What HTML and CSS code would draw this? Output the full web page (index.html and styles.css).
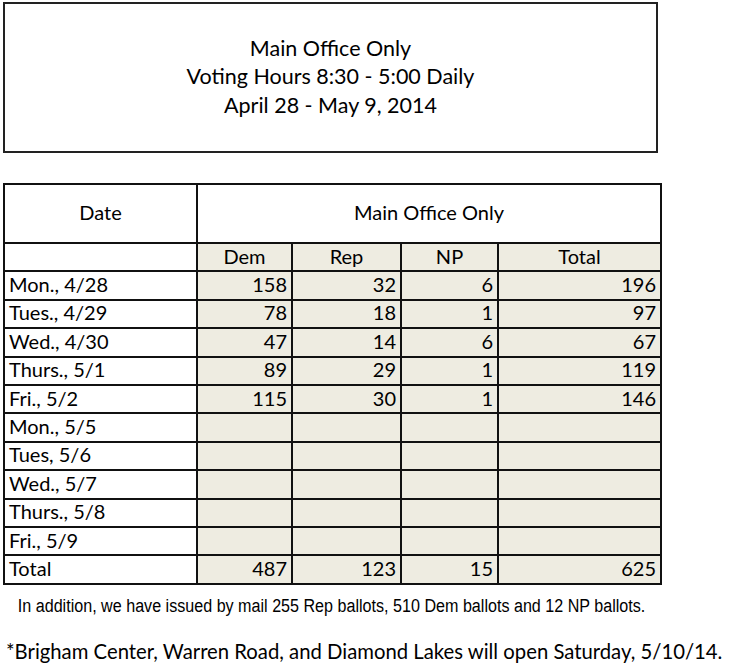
FILE: index.html
```html
<!DOCTYPE html>
<html>
<head>
<meta charset="utf-8">
<link rel="stylesheet" href="styles.css">
</head>
<body>
<div class="page">
  <div class="banner">
    <div>Main Office Only</div>
    <div>Voting Hours 8:30 - 5:00 Daily</div>
    <div>April 28 - May 9, 2014</div>
  </div>
  <table class="grid">
    <colgroup>
      <col class="c-date"><col class="c-dem"><col class="c-rep"><col class="c-np"><col class="c-total">
    </colgroup>
    <tr class="head1">
      <td class="center">Date</td>
      <td class="center" colspan="4">Main Office Only</td>
    </tr>
    <tr class="head2">
      <td></td>
      <td class="fill center">Dem</td>
      <td class="fill center">Rep</td>
      <td class="fill center">NP</td>
      <td class="fill center">Total</td>
    </tr>
    <tr><td>Mon., 4/28</td><td class="fill num">158</td><td class="fill num">32</td><td class="fill num">6</td><td class="fill num">196</td></tr>
    <tr><td>Tues., 4/29</td><td class="fill num">78</td><td class="fill num">18</td><td class="fill num">1</td><td class="fill num">97</td></tr>
    <tr><td>Wed., 4/30</td><td class="fill num">47</td><td class="fill num">14</td><td class="fill num">6</td><td class="fill num">67</td></tr>
    <tr><td>Thurs., 5/1</td><td class="fill num">89</td><td class="fill num">29</td><td class="fill num">1</td><td class="fill num">119</td></tr>
    <tr><td>Fri., 5/2</td><td class="fill num">115</td><td class="fill num">30</td><td class="fill num">1</td><td class="fill num">146</td></tr>
    <tr><td>Mon., 5/5</td><td class="fill"></td><td class="fill"></td><td class="fill"></td><td class="fill"></td></tr>
    <tr><td>Tues, 5/6</td><td class="fill"></td><td class="fill"></td><td class="fill"></td><td class="fill"></td></tr>
    <tr><td>Wed., 5/7</td><td class="fill"></td><td class="fill"></td><td class="fill"></td><td class="fill"></td></tr>
    <tr><td>Thurs., 5/8</td><td class="fill"></td><td class="fill"></td><td class="fill"></td><td class="fill"></td></tr>
    <tr><td>Fri., 5/9</td><td class="fill"></td><td class="fill"></td><td class="fill"></td><td class="fill"></td></tr>
    <tr><td>Total</td><td class="fill num">487</td><td class="fill num">123</td><td class="fill num">15</td><td class="fill num">625</td></tr>
  </table>
  <p class="note"><span>In addition, we have issued by mail 255 Rep ballots, 510 Dem ballots and 12 NP ballots.</span></p>
  <p class="foot">*Brigham Center, Warren Road, and Diamond Lakes will open Saturday, 5/10/14.</p>
</div>
</body>
</html>
```

FILE: styles.css
```css
html, body {
  margin: 0;
  padding: 0;
  background: #ffffff;
}
.page {
  padding: 2px 0 0 3px;
  width: 657px;
  font-family: Lato, "Open Sans", sans-serif;
  color: #000;
}
.banner {
  box-sizing: border-box;
  width: 655px;
  height: 151px;
  border: 2px solid #222;
  display: flex;
  flex-direction: column;
  justify-content: center;
  align-items: center;
  font-size: 21.5px;
  line-height: 28.5px;
  padding-bottom: 2px;
}
.grid {
  margin-top: 30px;
  border-collapse: collapse;
  table-layout: fixed;
  width: 657px;
  font-size: 20px;
}
.grid tr {
  height: 28.4px;
}
.grid tr.head1 {
  height: 59px;
}
.grid td {
  border: 2px solid #111;
  padding: 0 4px 3px 4px;
  line-height: 20px;
  white-space: nowrap;
  overflow: hidden;
}
.grid tr.head1 td {
  padding-bottom: 4px;
}
.c-date { width: 193px; }
.c-dem { width: 95px; }
.c-rep { width: 109px; }
.c-np { width: 97px; }
.c-total { width: 163px; }
.fill { background: #eeece1; }
.center { text-align: center; }
.num { text-align: right; }
.note {
  margin: 10px 0 0 0;
  width: 657px;
  display: flex;
  justify-content: center;
  font-family: "Liberation Sans", Arial, sans-serif;
  font-size: 18px;
  line-height: 22px;
}
.note span {
  display: block;
  flex: none;
  transform: scaleX(0.895);
  transform-origin: center;
  white-space: nowrap;
}
.foot {
  margin: 22px 0 0 3px;
  font-size: 20.3px;
  line-height: 24px;
  white-space: nowrap;
}
```
